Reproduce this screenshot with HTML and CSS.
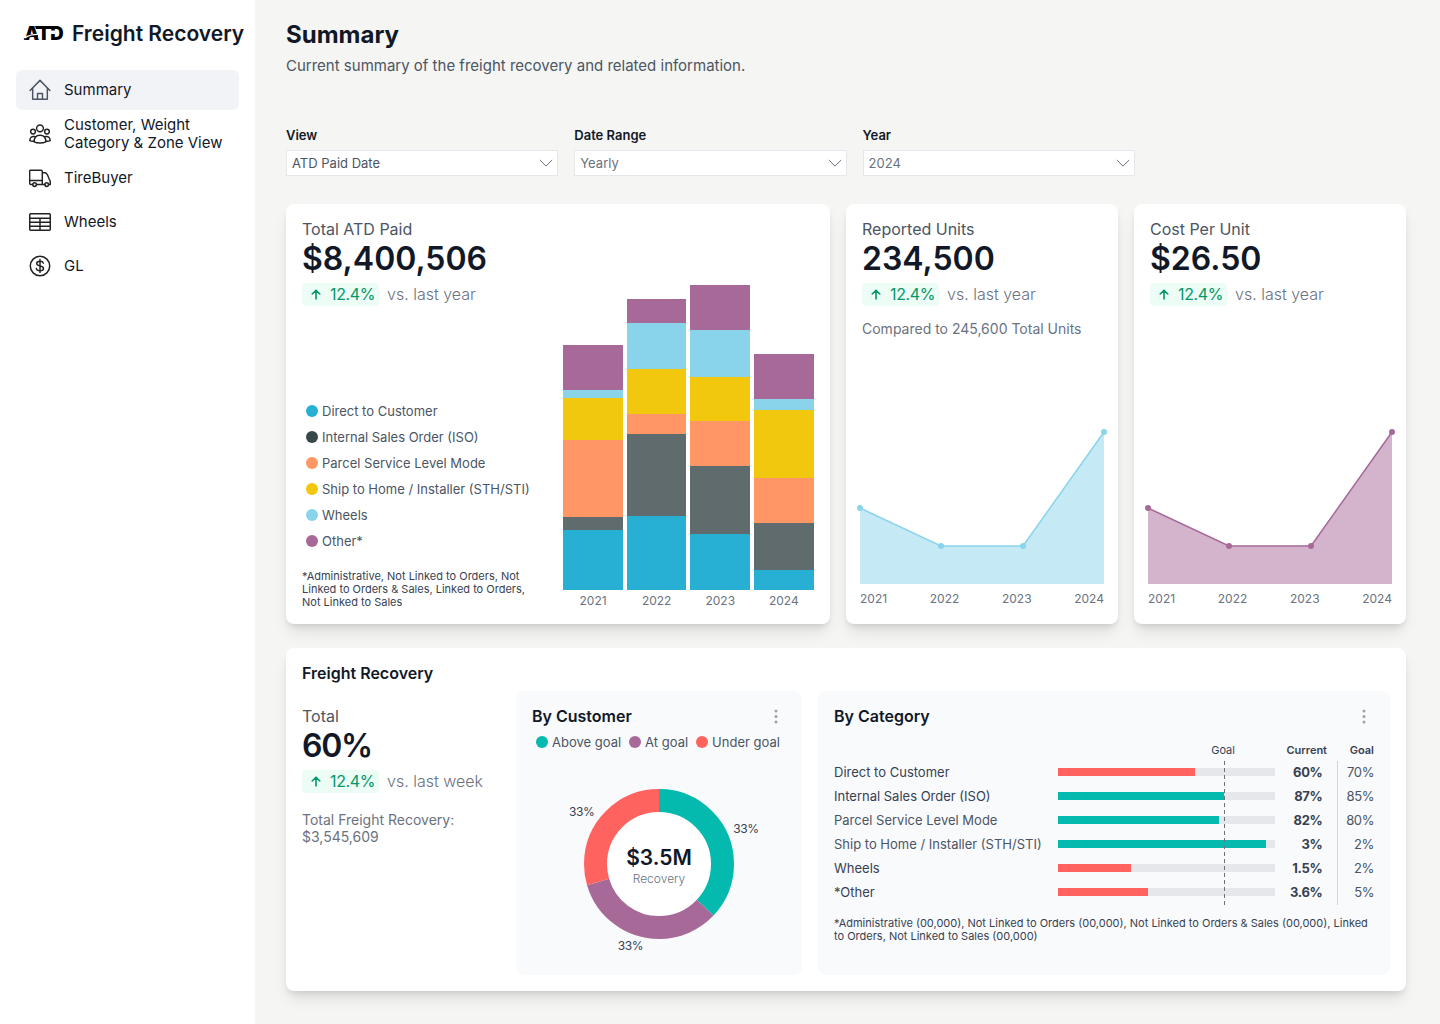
FILE: index.html
```html
<!DOCTYPE html>
<html lang="en">
<head>
<meta charset="utf-8">
<title>Freight Recovery</title>
<link rel="stylesheet" href="styles.css">
</head>
<body>
<div class="app">
  <aside class="sidebar">
    <div class="brand">
      <svg class="logo" width="40" height="20" viewBox="0 -3 40 20" role="img" aria-label="ATD">
        <text class="logo-text" x="0.500" y="13.500" textLength="39" lengthAdjust="spacingAndGlyphs">ATD</text>
        <path d="M0 13.400Q5 9.400 14 9.800" fill="none" stroke="#000" stroke-width="1.600"/>
        <path d="M1 12Q6 8 16 8.500" fill="none" stroke="#fff" stroke-width="1.200"/>
        <path d="M26 4.500h5v3.500h-5z" fill="#fff"/>
        <path d="M11 0h18v3H12z" fill="#000"/>
      </svg>
      <span class="brand-name">Freight Recovery</span>
    </div>
    <nav class="nav">
      <a class="nav-item active">
        <svg class="icon slate" viewBox="0 0 24 24"><path d="M1.200 12.500 12 1.500l10.800 11M4 10v12h16V10M9.300 22v-6.200h5.400V22"/></svg>
        <span>Summary</span>
      </a>
      <a class="nav-item">
        <svg class="icon" viewBox="0 0 24 24"><circle cx="12" cy="5.800" r="3.700"/><circle cx="4.400" cy="9.300" r="2.600"/><circle cx="19.600" cy="9.300" r="2.600"/><path d="M5.600 20.500c0-4.500 2.600-7.200 6.400-7.200s6.400 2.700 6.400 7.200c-3.500 1.800-9.300 1.800-12.800 0ZM6 14.800c-3.200-.6-4.900 1-5.100 4.300 1 .6 2.700.9 4.600.7M18 14.800c3.200-.6 4.900 1 5.100 4.300-1 .6-2.700.9-4.600.7"/></svg>
        <span>Customer, Weight Category &amp; Zone View</span>
      </a>
      <a class="nav-item">
        <svg class="icon" viewBox="0 0 24 24"><path d="M4 19H1.900a1.200 1.200 0 0 1-1.200-1.200V4.700a1.200 1.200 0 0 1 1.200-1.200h11.400a1.200 1.200 0 0 1 1.200 1.200V19H8.200M.7 14.700h13.800M14.500 6.200h2.800c2.500 0 3.200 2.500 4.200 5.800l1.700 3.500V19h-1.600M17.400 19h-2.900"/><circle cx="6.100" cy="19.200" r="2"/><circle cx="19.300" cy="19.200" r="2"/></svg>
        <span>TireBuyer</span>
      </a>
      <a class="nav-item">
        <svg class="icon" viewBox="0 0 24 24"><rect x=".8" y="3" width="22.400" height="18" rx="1"/><path d="M.8 7.800h22.400M.8 12.200h22.400M.8 16.600h22.400M12 7.800V21"/></svg>
        <span>Wheels</span>
      </a>
      <a class="nav-item">
        <svg class="icon" viewBox="0 0 24 24"><circle cx="12" cy="12" r="10.600"/><path d="M15.600 8.900c-.4-1.300-1.700-2-3.600-2-2.200 0-3.600.9-3.600 2.500 0 3.700 7.400 1.500 7.400 5.200 0 1.600-1.500 2.500-3.800 2.500-2.200 0-3.600-.8-3.900-2.300M12 4.800v14.400"/></svg>
        <span>GL</span>
      </a>
    </nav>
  </aside>

  <main class="main">
    <h1 class="title">Summary</h1>
    <p class="subtitle">Current summary of the freight recovery and related information.</p>

    <div class="filters">
      <div class="filter"><span class="filter-label">View</span>
        <div class="select dark"><span>ATD Paid Date</span><svg width="14" height="8" viewBox="0 0 14 8"><path d="M.8 1 7 7l6.200-6"/></svg></div></div>
      <div class="filter"><span class="filter-label">Date Range</span>
        <div class="select"><span>Yearly</span><svg width="14" height="8" viewBox="0 0 14 8"><path d="M.8 1 7 7l6.200-6"/></svg></div></div>
      <div class="filter"><span class="filter-label">Year</span>
        <div class="select"><span>2024</span><svg width="14" height="8" viewBox="0 0 14 8"><path d="M.8 1 7 7l6.200-6"/></svg></div></div>
    </div>

    <div class="cards">
      <section class="card paid">
        <div class="paid-info">
          <div class="stat">
            <span class="stat-label">Total ATD Paid</span>
            <span class="stat-value">$8,400,506</span>
            <div class="trend"><span class="badge"><svg width="10" height="11" viewBox="0 0 10 11"><path d="M5 10V1.500M1.200 5 5 1.200 8.800 5"/></svg>12.4%</span><span class="versus">vs. last year</span></div>
          </div>
          <div class="paid-legend">
            <ul class="legend">
              <li><i class="dot c-direct"></i>Direct to Customer</li>
              <li><i class="dot c-iso-dot"></i>Internal Sales Order (ISO)</li>
              <li><i class="dot c-parcel"></i>Parcel Service Level Mode</li>
              <li><i class="dot c-ship"></i>Ship to Home / Installer (STH/STI)</li>
              <li><i class="dot c-wheels"></i>Wheels</li>
              <li><i class="dot c-other"></i>Other*</li>
            </ul>
            <p class="note">*Administrative, Not Linked to Orders, Not Linked to Orders &amp; Sales, Linked to Orders, Not Linked to Sales</p>
          </div>
        </div>
        <div class="bars">
          <div class="bar"><i class="c-other" style="height:45px"></i><i class="c-wheels" style="height:7.500px"></i><i class="c-ship" style="height:42.500px"></i><i class="c-parcel" style="height:77px"></i><i class="c-iso" style="height:13px"></i><i class="c-direct" style="height:60px"></i><span>2021</span></div>
          <div class="bar"><i class="c-other" style="height:24px"></i><i class="c-wheels" style="height:46px"></i><i class="c-ship" style="height:45px"></i><i class="c-parcel" style="height:20px"></i><i class="c-iso" style="height:82px"></i><i class="c-direct" style="height:74px"></i><span>2022</span></div>
          <div class="bar"><i class="c-other" style="height:45px"></i><i class="c-wheels" style="height:47px"></i><i class="c-ship" style="height:44px"></i><i class="c-parcel" style="height:45px"></i><i class="c-iso" style="height:68px"></i><i class="c-direct" style="height:56px"></i><span>2023</span></div>
          <div class="bar"><i class="c-other" style="height:45px"></i><i class="c-wheels" style="height:11px"></i><i class="c-ship" style="height:68px"></i><i class="c-parcel" style="height:45px"></i><i class="c-iso" style="height:47px"></i><i class="c-direct" style="height:20px"></i><span>2024</span></div>
        </div>
      </section>

      <section class="card metric">
        <div class="stat">
          <span class="stat-label">Reported Units</span>
          <span class="stat-value">234,500</span>
          <div class="trend"><span class="badge"><svg width="10" height="11" viewBox="0 0 10 11"><path d="M5 10V1.500M1.200 5 5 1.200 8.800 5"/></svg>12.4%</span><span class="versus">vs. last year</span></div>
          <span class="stat-note">Compared to 245,600 Total Units</span>
        </div>
        <div class="area blue">
          <svg width="250" height="155" viewBox="0 0 250 155"><path class="fill" d="M3 79 84 117H166L247 3V155H3Z"/><path class="line" d="M3 79 84 117H166L247 3"/><circle cx="3" cy="79" r="3"/><circle cx="84" cy="117" r="3"/><circle cx="166" cy="117" r="3"/><circle cx="247" cy="3" r="3"/></svg>
          <div class="axis"><span>2021</span><span>2022</span><span>2023</span><span>2024</span></div>
        </div>
      </section>

      <section class="card metric">
        <div class="stat">
          <span class="stat-label">Cost Per Unit</span>
          <span class="stat-value">$26.50</span>
          <div class="trend"><span class="badge"><svg width="10" height="11" viewBox="0 0 10 11"><path d="M5 10V1.500M1.200 5 5 1.200 8.800 5"/></svg>12.4%</span><span class="versus">vs. last year</span></div>
        </div>
        <div class="area plum">
          <svg width="250" height="155" viewBox="0 0 250 155"><path class="fill" d="M3 79 84 117H166L247 3V155H3Z"/><path class="line" d="M3 79 84 117H166L247 3"/><circle cx="3" cy="79" r="3"/><circle cx="84" cy="117" r="3"/><circle cx="166" cy="117" r="3"/><circle cx="247" cy="3" r="3"/></svg>
          <div class="axis"><span>2021</span><span>2022</span><span>2023</span><span>2024</span></div>
        </div>
      </section>
    </div>

    <section class="card recovery">
      <h2 class="heading">Freight Recovery</h2>
      <div class="recovery-body">
        <div class="stat total">
          <span class="stat-label">Total</span>
          <span class="stat-value percent">60%</span>
          <div class="trend"><span class="badge"><svg width="10" height="11" viewBox="0 0 10 11"><path d="M5 10V1.500M1.200 5 5 1.200 8.800 5"/></svg>12.4%</span><span class="versus">vs. last week</span></div>
          <span class="stat-note">Total Freight Recovery:<br>$3,545,609</span>
        </div>

        <div class="panel customer">
          <div class="panel-head"><h3 class="heading">By Customer</h3><svg class="more" width="4" height="15" viewBox="0 0 4 15"><circle cx="2" cy="2" r="1.500"/><circle cx="2" cy="7.500" r="1.500"/><circle cx="2" cy="13" r="1.500"/></svg></div>
          <ul class="goal-legend">
            <li><i class="dot c-above"></i>Above goal</li>
            <li><i class="dot c-other"></i>At goal</li>
            <li><i class="dot c-under"></i>Under goal</li>
          </ul>
          <svg class="donut" width="254" height="190" viewBox="532 774 254 190">
            <circle cx="659" cy="864" r="53" fill="#fff"/>
            <g fill="none" stroke-width="23" transform="rotate(-90 659 864)">
              <circle cx="659" cy="864" r="63.500" pathLength="360" stroke="#04b9ad" stroke-dasharray="133.400 226.600"/>
              <circle cx="659" cy="864" r="63.500" pathLength="360" stroke="#a76998" stroke-dasharray="120.100 239.900" stroke-dashoffset="-133.400"/>
              <circle cx="659" cy="864" r="63.500" pathLength="360" stroke="#ff635f" stroke-dasharray="106.500 253.500" stroke-dashoffset="-253.500"/>
            </g>
            <text class="donut-value" x="659" y="864.500">$3.5M</text>
            <text class="donut-label" x="659" y="882.500">Recovery</text>
            <text class="donut-pct" x="746" y="833">33%</text>
            <text class="donut-pct" x="581.700" y="816">33%</text>
            <text class="donut-pct" x="630.500" y="949.500">33%</text>
          </svg>
        </div>

        <div class="panel category">
          <div class="panel-head"><h3 class="heading">By Category</h3><svg class="more" width="4" height="15" viewBox="0 0 4 15"><circle cx="2" cy="2" r="1.500"/><circle cx="2" cy="7.500" r="1.500"/><circle cx="2" cy="13" r="1.500"/></svg></div>
          <div class="cat-head"><span class="goal-mark">Goal</span><b>Current</b><b>Goal</b></div>
          <div class="cat-rows">
            <div class="row"><span>Direct to Customer</span><div class="track"><i class="c-under" style="width:63%"></i></div><b>60%</b><em>70%</em></div>
            <div class="row"><span>Internal Sales Order (ISO)</span><div class="track"><i class="c-above" style="width:76.700%"></i></div><b>87%</b><em>85%</em></div>
            <div class="row soft"><span>Parcel Service Level Mode</span><div class="track"><i class="c-above" style="width:74.400%"></i></div><b>82%</b><em>80%</em></div>
            <div class="row soft"><span>Ship to Home / Installer (STH/STI)</span><div class="track"><i class="c-above" style="width:95.800%"></i></div><b>3%</b><em>2%</em></div>
            <div class="row"><span>Wheels</span><div class="track"><i class="c-under" style="width:33.600%"></i></div><b>1.5%</b><em>2%</em></div>
            <div class="row"><span>*Other</span><div class="track"><i class="c-under" style="width:41.300%"></i></div><b>3.6%</b><em>5%</em></div>
            <div class="goal-line"></div>
            <div class="divider"></div>
          </div>
          <p class="note">*Administrative (00,000), Not Linked to Orders (00,000), Not Linked to Orders &amp; Sales (00,000), Linked to Orders, Not Linked to Sales (00,000)</p>
        </div>
      </div>
    </section>
  </main>
</div>
</body>
</html>
```
FILE: styles.css
```css
* { box-sizing: border-box; }
body { margin: 0; font-family: Inter, "Liberation Sans", sans-serif; color: #111827; background: #f5f5f3; }
h1, h2, h3, p, ul { margin: 0; padding: 0; }
ul { list-style: none; }
i, em { font-style: normal; }

.app { display: flex; height: 1024px; overflow: hidden; }
.sidebar { width: 255px; flex: none; background: #fff; padding: 17px 0 0 16px; }
.brand { display: flex; align-items: center; gap: 8px; height: 32px; padding-left: 8px; white-space: nowrap; }
.logo { flex: none; overflow: visible; }
.logo-text { font-size: 18.500px; font-weight: 900; fill: #000; }
.brand-name { font-size: 21px; font-weight: 600; }
.nav { display: flex; flex-direction: column; gap: 4px; width: 223px; margin-top: 21px; }
.nav-item { display: flex; align-items: center; gap: 13px; height: 40px; padding: 0 12px 0 13px; border-radius: 6px; font-size: 15px; line-height: 18px; }
.nav-item.active { background: #f2f3f6; }
.icon { width: 22px; height: 22px; flex: none; fill: none; stroke: #222; stroke-width: 1.6; stroke-linejoin: round; stroke-linecap: round; }
.icon.slate { stroke: #4b5563; }

.main { flex: 1; padding: 18px 34px 0 31px; }
.title { font-size: 24px; line-height: 34px; font-weight: 700; }
.subtitle { margin-top: 4px; font-size: 15px; line-height: 20px; color: #4b5563; }
.filters { display: flex; gap: 16px; margin-top: 49px; }
.filter { width: 272.300px; }
.filter-label { display: block; font-size: 13px; line-height: 20px; font-weight: 600; margin-bottom: 5px; }
.select { display: flex; align-items: center; justify-content: space-between; height: 26px; padding: 0 4px 0 5px; border: 1px solid #e5e7eb; background: #fff; font-size: 13px; color: #6b7280; }
.select.dark { color: #4b5563; }
.select svg { fill: none; stroke: #6b7280; stroke-width: 1; }

.card { background: #fff; border-radius: 8px; box-shadow: 0 10px 15px -3px rgba(0,0,0,.1), 0 4px 6px -2px rgba(0,0,0,.1); }
.cards { display: grid; grid-template-columns: 1fr 272px 272px; gap: 16px; margin-top: 28px; height: 420px; }
.paid { display: flex; justify-content: space-between; padding: 13px 16.400px 16px 16px; }
.paid-info { display: flex; flex-direction: column; justify-content: space-between; width: 232px; }
.stat { display: flex; flex-direction: column; align-items: flex-start; }
.stat-label { font-size: 16px; line-height: 24px; color: #4b5563; }
.stat-value { font-size: 32px; line-height: 36px; height: 36px; font-weight: 600; }
.stat-value.percent { letter-spacing: -1.300px; }
.trend { display: flex; align-items: center; gap: 8px; margin-top: 6px; }
.badge { display: flex; align-items: center; gap: 9px; height: 23px; width: 77px; padding-left: 9px; border-radius: 4px; background: #ecfdf5; color: #059669; font-size: 16px; line-height: 22px; padding-bottom: 1px; letter-spacing: -.350px; }
.badge svg { fill: none; stroke: #059669; stroke-width: 1.600; stroke-linecap: round; stroke-linejoin: round; }
.versus { font-size: 16px; line-height: 22px; padding-bottom: 1px; font-weight: 300; color: #6b7280; }
.stat-note { margin-top: 14px; font-size: 14px; line-height: 17px; color: #6b7280; }
.legend { font-size: 13px; line-height: 26px; color: #4b5563; padding-left: 4px; white-space: nowrap; }
.legend li, .goal-legend li { display: flex; align-items: center; gap: 4px; }
.dot { width: 12px; height: 12px; border-radius: 50%; flex: none; }
.note { font-size: 11px; line-height: 13px; color: #374151; }
.paid .note { margin-top: 16px; margin-bottom: -1px; }
.c-direct { background: #27b0d4; }
.c-iso { background: #5f6b6d; }
.c-iso-dot { background: #37474a; }
.c-parcel { background: #ff9666; }
.c-ship { background: #f2c80f; }
.c-wheels { background: #8ad4eb; }
.c-other { background: #a76998; }
.c-above { background: #04b9ad; }
.c-under { background: #ff635f; }
.bars { display: flex; align-items: flex-end; gap: 4px; width: 250.300px; }
.bar { flex: 1; display: flex; flex-direction: column; text-align: center; }
.bar span { font-size: 12px; line-height: 18px; height: 18px; padding-top: 2px; color: #6b7280; }

.metric { display: flex; flex-direction: column; justify-content: space-between; padding: 13px 11px 16px; }
.metric .stat { padding-left: 5px; }
.area svg { display: block; overflow: visible; }
.blue { --line: #8ad4eb; --tint: #c5e9f5; }
.plum { --line: #a76998; --tint: #d3b4cc; }
.area .fill { fill: var(--tint); }
.area .line { fill: none; stroke: var(--line); stroke-width: 1.500; }
.area circle { fill: var(--line); }
.axis { display: flex; justify-content: space-between; width: 244px; margin: 6px 0 0 3px; font-size: 12px; line-height: 18px; color: #6b7280; }

.recovery { margin-top: 24px; height: 343px; padding: 15px 16px 16px; }
.heading { font-size: 16px; line-height: 20px; font-weight: 600; }
.recovery-body { display: flex; gap: 16px; margin-top: 8px; height: 284px; }
.total { width: 198px; padding-top: 13px; }
.total .stat-note { margin-top: 18px; }
.panel { background: #f9fafc; border-radius: 8px; padding: 15px 16px 16px; }
.panel-head { display: flex; justify-content: space-between; align-items: center; height: 20px; padding-right: 8px; }
.more { fill: #9ca3af; }
.customer { width: 286px; flex: none; }
.goal-legend { display: flex; gap: 8px; height: 20px; margin-top: 6px; padding-left: 4px; font-size: 13px; color: #4b5563; white-space: nowrap; }
.donut { display: block; margin-top: 22px; }
.donut text { text-anchor: middle; }
.donut-value { font-size: 21px; font-weight: 600; fill: #111827; }
.donut-label { font-size: 12px; font-weight: 300; fill: #6b7280; }
.donut-pct { font-size: 12px; letter-spacing: -.400px; fill: #374151; }
.category { flex: 1; }
.cat-head { display: flex; justify-content: flex-end; margin-top: 17px; height: 17px; font-size: 11px; line-height: 14px; color: #374151; }
.goal-mark { margin-right: 51.500px; }
.cat-head b { font-weight: 600; }
.cat-head b + b { width: 47px; text-align: right; }
.cat-rows { position: relative; height: 144px; }
.row { display: grid; grid-template-columns: 224px 217px 47.500px 1fr; align-items: center; height: 24px; font-size: 13px; color: #374151; white-space: nowrap; }
.row.soft > span { color: #4b5563; }
.row b { font-weight: 700; text-align: right; letter-spacing: -.300px; }
.row em { text-align: right; color: #4b5563; letter-spacing: -.400px; }
.track { height: 8px; background: #e5e7eb; }
.track i { display: block; height: 8px; }
.goal-line { position: absolute; left: 390px; top: 1px; width: 1px; height: 144px; background: repeating-linear-gradient(#6b7280 0 4px, transparent 4px 7px); }
.divider { position: absolute; left: 503px; top: 1px; width: 1px; height: 144px; background: #d1d5db; }
.category .note { margin-top: 13px; }
```
